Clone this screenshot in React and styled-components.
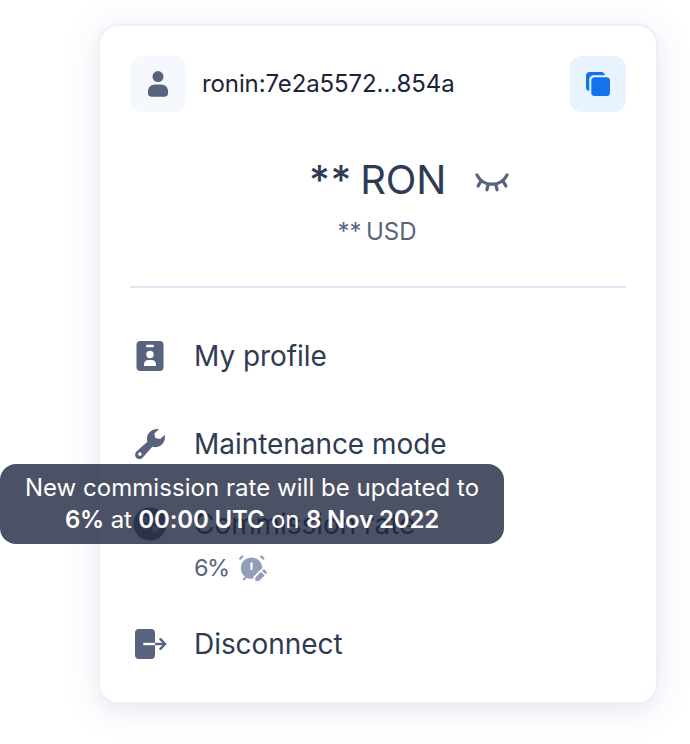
import React from "react";
import styled, { createGlobalStyle } from "styled-components";

const Global = createGlobalStyle`
  *, *::before, *::after { box-sizing: border-box; }
  body {
    margin: 0;
    background: #fff;
    font-family: Inter, sans-serif;
    font-weight: 400;
    color: #2f3b53;
    overflow: hidden;
  }
  svg { display: block; }
`;

const Page = styled.main`
  position: relative;
  width: 690px;
  height: 744px;
  padding: 24px 32px 40px 98px;
  overflow: hidden;
`;

const Card = styled.section`
  width: 560px;
  height: 680px;
  padding: 30px;
  border: 2px solid #ebf1fb;
  border-radius: 20px;
  background: #fff;
  box-shadow: 0 4px 40px rgba(40, 70, 130, 0.09), 0 8px 16px rgba(60, 100, 160, 0.05);
`;

const Header = styled.header`
  display: flex;
  align-items: center;
  height: 56px;
`;

const IconTile = styled.div`
  display: grid;
  place-items: center;
  width: 56px;
  height: 56px;
  border-radius: 12px;
  background: ${(p) => p.$bg};
  color: ${(p) => p.$color};
`;

const Address = styled.span`
  flex: 1;
  margin-left: 16px;
  font-size: 24px;
  line-height: 32px;
  letter-spacing: -0.1px;
  color: #1b2438;
`;

const Balance = styled.div`
  display: grid;
  grid-template-columns: 1fr auto 1fr;
  align-items: center;
  height: 48px;
  margin-top: 44px;
`;

const Amount = styled.div`
  grid-column: 2;
  padding-right: 1px;
  font-size: 40px;
  line-height: 48px;
  letter-spacing: -0.2px;
  word-spacing: -3px;
  white-space: nowrap;
`;

const Mask = styled.span`
  font-weight: 500;
  letter-spacing: 0.8px;
`;

const EyeButton = styled.div`
  margin-left: 25px;
  color: #58647d;
`;

const Fiat = styled.div`
  margin-top: 12px;
  padding-right: 2px;
  text-align: center;
  font-size: 24px;
  line-height: 32px;
  letter-spacing: -0.1px;
  word-spacing: -2px;
  color: #58647d;
`;

const Divider = styled.hr`
  height: 2px;
  margin: 38px 0 0;
  border: 0;
  background: #dce7f4;
`;

const Menu = styled.nav`
  padding-top: 48px;
`;

const MenuItem = styled.div`
  display: flex;
  align-items: center;
  height: 40px;
  margin-bottom: ${(p) => p.$gap || "0"};
`;

const MenuIcon = styled.span`
  flex: none;
  width: 40px;
  height: 40px;
  margin-right: 24px;
  color: #58647d;
`;

const MenuLabel = styled.span`
  font-size: 28px;
  line-height: 40px;
  letter-spacing: -0.05px;
  white-space: nowrap;
`;

const Rate = styled.div`
  display: flex;
  align-items: center;
  height: 32px;
  margin: 8px 0 40px 64px;
  font-size: 24px;
  line-height: 32px;
  color: #58647d;
`;

const RateValue = styled.span`
  width: 40px;
  font-size: 23.5px;
  letter-spacing: -1.5px;
`;

const Tooltip = styled.div`
  position: absolute;
  top: 464px;
  left: 0;
  width: 504px;
  height: 80px;
  padding: 8px 16px;
  border-radius: 16px;
  background: rgba(31, 39, 62, 0.8);
  color: #fff;
  text-align: center;
  font-size: 24px;
  line-height: 32px;
  white-space: nowrap;
`;

const TipLine = styled.div`
  letter-spacing: ${(p) => p.$spacing};
`;

const Strong = styled.strong`
  font-weight: 600;
`;

const UserIcon = () => (
  <svg width="56" height="56" fill="currentColor">
    <circle cx="28" cy="20.6" r="5.5" />
    <path d="M25 28.5h6c4.500 0 7 3 7 6.800v1.700c0 2.500-1.300 3.700-3.800 3.700H21.800c-2.500 0-3.800-1.200-3.800-3.700v-1.700c0-3.800 2.500-6.800 7-6.800z" />
  </svg>
);

const CopyIcon = () => (
  <svg width="56" height="56" fill="currentColor">
    <path d="M19.300 34.800c-2.200-.2-3.300-1.300-3.300-3V20c0-2.700 1.300-4 4-4h11.500c1.700 0 2.900.9 3.300 3.300H24.300c-3.500 0-5 1.500-5 5z" />
    <rect x="21.300" y="21.300" width="18.700" height="18.700" rx="3.500" />
  </svg>
);

const ClosedEyeIcon = () => (
  <svg width="40" height="40" fill="none" stroke="currentColor" strokeWidth="3.200" strokeLinecap="round">
    <path d="M4.900 14.900C11.500 27.300 28.500 27.300 35.100 14.900M8.800 21.200l-2.700 4.900M16.200 24.500l-1.300 5.300M23.800 24.500l1.300 5.300M31.200 21.200l2.700 4.900" />
  </svg>
);

const ProfileIcon = () => (
  <svg width="40" height="40">
    <rect x="6.500" y="5" width="27" height="30" rx="4" fill="currentColor" />
    <rect x="16" y="8.700" width="8" height="2.500" rx="1" fill="#fff" />
    <circle cx="20" cy="18.500" r="3.700" fill="#fff" />
    <path d="M14 30v-1.500c0-2.700 1.600-4.600 4.500-4.600h3c2.900 0 4.500 1.900 4.500 4.600V30z" fill="#fff" />
  </svg>
);

const WrenchIcon = () => (
  <svg width="40" height="40">
    <path
      d="M29 5.200c-5.800-1.200-11.300 2.700-12 8.800-.1 1.300 0 2.500.4 3.800L6.700 27.300c-2 1.900-2.200 4.700-.4 6.400 1.800 1.900 4.700 1.700 6.500-.3l9.500-10.700c6 2 12.500-2.700 12.700-9.300 0-1-.1-1.700-.3-2.500l-4.600 4-4.800-.9-1-4.500z"
      fill="currentColor"
    />
    <circle cx="9.900" cy="30.100" r="1.800" fill="#fff" />
  </svg>
);

const PercentIcon = () => (
  <svg width="40" height="40">
    <circle cx="20" cy="20" r="16.600" fill="currentColor" />
    <g fill="none" stroke="#fff" strokeOpacity="0.5" strokeWidth="2.200" strokeLinecap="round">
      <path d="M25 14.500L15 25.500" />
      <circle cx="15" cy="15.500" r="1.600" />
      <circle cx="25" cy="25" r="1.600" />
    </g>
  </svg>
);

const DisconnectIcon = () => (
  <svg width="40" height="40" fill="none" strokeLinecap="round" strokeLinejoin="round">
    <rect x="5" y="5" width="20" height="30" rx="4" fill="currentColor" />
    <path d="M25 20h10M30.400 15.200l4.800 4.800-4.800 4.800" stroke="currentColor" strokeWidth="2.400" />
    <path d="M13.300 20H25" stroke="#fff" strokeWidth="2.400" strokeLinecap="butt" />
  </svg>
);

const AlarmEditIcon = () => (
  <svg width="34" height="32" fill="none" stroke="#929eb7">
    <circle cx="17.500" cy="16.100" r="10.700" fill="#929eb7" stroke="none" />
    <path d="M5.500 7.200l3.500-3.300M26.500 3.900l3.500 3.300M12.700 24.100l-3.300 4" strokeWidth="2.200" />
    <path d="M17.500 11.300v5.800" stroke="#fff" strokeWidth="2.200" strokeLinecap="round" />
    <path d="M19.500 30.500v-5.700l8.800-8.800 5.200 5v9.500z" fill="#fff" stroke="none" />
    <path d="M21.300 29.100v-3.700l5.700-5.700 3.700 3.700-5.700 5.700zM28 18.700l1.200-1.200c.4-.4.800-.4 1.200 0l2.300 2.300c.4.4.4.800 0 1.200l-1.100 1.200z" fill="#929eb7" stroke="none" />
  </svg>
);

export default function App() {
  return (
    <>
      <Global />
      <Page>
        <Card>
          <Header>
            <IconTile $bg="#f5f8fd" $color="#58647d"><UserIcon /></IconTile>
            <Address>ronin:7e2a5572...854a</Address>
            <IconTile $bg="#e7f4ff" $color="#1273ea"><CopyIcon /></IconTile>
          </Header>
          <Balance>
            <Amount><Mask>**</Mask> RON</Amount>
            <EyeButton><ClosedEyeIcon /></EyeButton>
          </Balance>
          <Fiat>** USD</Fiat>
          <Divider />
          <Menu>
            <MenuItem $gap="48px">
              <MenuIcon><ProfileIcon /></MenuIcon>
              <MenuLabel>My profile</MenuLabel>
            </MenuItem>
            <MenuItem $gap="40px">
              <MenuIcon><WrenchIcon /></MenuIcon>
              <MenuLabel>Maintenance mode</MenuLabel>
            </MenuItem>
            <MenuItem>
              <MenuIcon><PercentIcon /></MenuIcon>
              <MenuLabel>Commission rate</MenuLabel>
            </MenuItem>
            <Rate>
              <RateValue>6%</RateValue>
              <AlarmEditIcon />
            </Rate>
            <MenuItem>
              <MenuIcon><DisconnectIcon /></MenuIcon>
              <MenuLabel>Disconnect</MenuLabel>
            </MenuItem>
          </Menu>
        </Card>
        <Tooltip role="tooltip">
          <TipLine $spacing="0.04px">New commission rate will be updated to</TipLine>
          <TipLine $spacing="-0.15px">
            <Strong>6%</Strong> at <Strong>00:00 UTC</Strong> on <Strong>8 Nov 2022</Strong>
          </TipLine>
        </Tooltip>
      </Page>
    </>
  );
}
